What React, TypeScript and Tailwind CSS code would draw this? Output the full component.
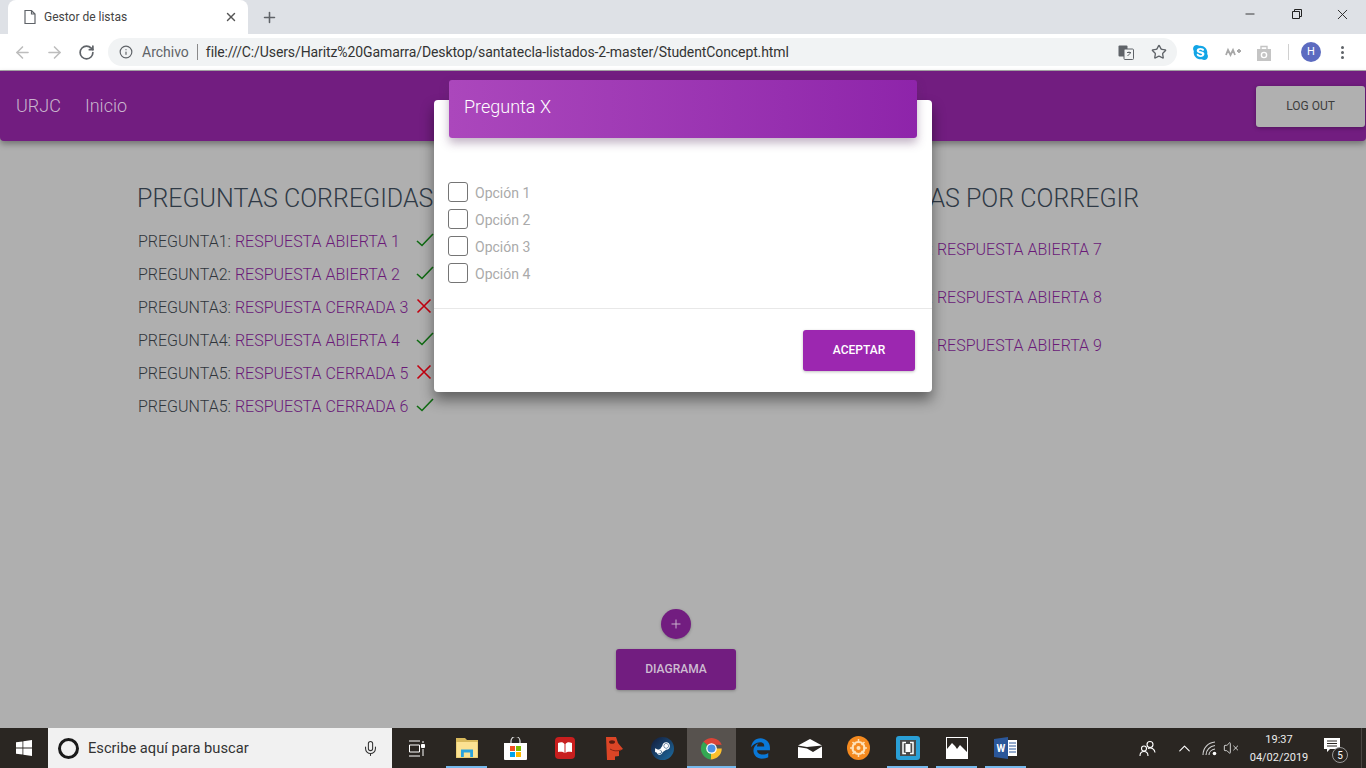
import { ArrowLeft, ArrowRight, ChevronUp, Info, Mic, Minus, Plus, RotateCw, Star, VolumeX, X } from "lucide-react";
import { FaEdgeLegacy, FaSkype, FaSteamSymbol } from "react-icons/fa";

const corrected = [
  { q: "PREGUNTA1:", a: "RESPUESTA ABIERTA 1", ok: true },
  { q: "PREGUNTA2:", a: "RESPUESTA ABIERTA 2", ok: true },
  { q: "PREGUNTA3:", a: "RESPUESTA CERRADA 3", ok: false },
  { q: "PREGUNTA4:", a: "RESPUESTA ABIERTA 4", ok: true },
  { q: "PREGUNTA5:", a: "RESPUESTA CERRADA 5", ok: false },
  { q: "PREGUNTA5:", a: "RESPUESTA CERRADA 6", ok: true },
];
const pending = [
  { q: "PREGUNTA7:", a: "RESPUESTA ABIERTA 7" },
  { q: "PREGUNTA8:", a: "RESPUESTA ABIERTA 8" },
  { q: "PREGUNTA9:", a: "RESPUESTA ABIERTA 9" },
];
const options = ["Opción 1", "Opción 2", "Opción 3", "Opción 4"];

function ChromeBar() {
  return (
    <div className="h-[71px] shrink-0 border-b border-[#a9a9a9] bg-white font-['Roboto',sans-serif]">
      {/* Tabs */}
      <div className="flex h-[34px] items-center bg-[#dee1e6] pl-2">
        <div className="flex h-[34px] w-[240px] items-center rounded-t-lg bg-white pl-[15px] pr-[10px]">
          <svg width="14" height="16" viewBox="0 0 14 16" fill="none" stroke="#5f6368" strokeWidth="1.2">
            <path d="M2 1.500h6.500l3.500 3.500v9.500H2z M8.500 1.500V5H12" />
          </svg>
          <span className="ml-[7px] flex-1 text-xs text-[#444]">Gestor de listas</span>
          <X size={14} color="#555" strokeWidth={2.4} />
        </div>
        <Plus size={17} color="#5f6368" strokeWidth={2.2} className="ml-[13px]" />
        <div className="flex-1" />
        <div className="mb-[6px] flex items-center pr-[15px]">
          <Minus size={14} color="#222" strokeWidth={1.5} className="-translate-x-px" />
          <svg className="ml-[33px]" width="12" height="12" viewBox="0 0 12 12" fill="none" stroke="#222">
            <path d="M1.500 3.500h7v7h-7z M3.500 3.500v-2h7v7h-2" />
          </svg>
          <X size={17} color="#222" strokeWidth={1.3} className="ml-[31px]" />
        </div>
      </div>
      {/* Toolbar */}
      <div className="flex h-[36px] items-center pl-[13px]">
        <ArrowLeft size={19} color="#bdbdbd" strokeWidth={2} />
        <ArrowRight size={19} color="#bdbdbd" strokeWidth={2} className="ml-[13px]" />
        <RotateCw size={17} color="#5f6368" strokeWidth={2.4} className="ml-[14px]" />
        <div className="ml-[13px] flex h-[28px] w-[1069px] items-center rounded-full bg-[#f1f3f4] pl-[11px] pr-[10px]">
          <Info size={14} color="#5f6368" strokeWidth={2} />
          <span className="ml-[9px] text-sm text-[#5f6368]">Archivo</span>
          <span className="ml-[8px] mr-[8px] h-[16px] w-px bg-[#8a8a8a]" />
          <span className="text-sm tracking-[-0.1px] text-[#333]">file:///C:/Users/Haritz%20Gamarra/Desktop/santatecla-listados-2-master/StudentConcept.html</span>
          <span className="flex-1" />
          <svg width="16" height="15" viewBox="0 0 16 15">
            <rect x="0.500" y="0.500" width="9" height="11" rx="1" fill="#5f6368" />
            <rect x="6" y="4" width="9.500" height="10.500" rx="1" fill="#f1f3f4" stroke="#5f6368" />
            <path d="M9 7.500h4M11 6.500v1M9.500 11l3-3" stroke="#5f6368" fill="none" />
          </svg>
          <Star size={16} color="#5f6368" strokeWidth={2} className="ml-[17px]" />
        </div>
        <FaSkype size={17} color="#12a5e6" className="ml-[15px]" />
        <svg className="ml-[16px]" width="16" height="10" viewBox="0 0 16 10" fill="none" stroke="#a8a8a8" strokeWidth="1.800">
          <path d="M1 8l2-5 2.500 5L8 3l2 5M12 4h4M14 2v4" />
        </svg>
        <svg className="ml-[15px]" width="16" height="17" viewBox="0 0 16 17">
          <path d="M1 5h14v12H1z" fill="#c4c4c4" />
          <path d="M5 5V2.500h6V5" fill="none" stroke="#c4c4c4" strokeWidth="1.400" />
          <circle cx="8" cy="11" r="2.600" fill="none" stroke="#fff" strokeWidth="1.400" />
        </svg>
        <span className="ml-[16px] h-[16px] w-px bg-[#d0d0d0]" />
        <span className="ml-[12px] flex h-[20px] w-[20px] items-center justify-center rounded-full bg-[#5c6bc0] text-[11px] text-white">H</span>
        <span className="ml-[20px] flex flex-col gap-[2px]">
          <span className="h-[3px] w-[3px] rounded-full bg-[#5f6368]" />
          <span className="h-[3px] w-[3px] rounded-full bg-[#5f6368]" />
          <span className="h-[3px] w-[3px] rounded-full bg-[#5f6368]" />
        </span>
      </div>
    </div>
  );
}

function Check() {
  return (
    <svg className="-mt-[3px]" width="18" height="14" viewBox="0 0 18 14" fill="none" stroke="#0f6b12" strokeWidth="1.600">
      <path d="M1 8l5 4.500L17 1" />
    </svg>
  );
}

function Cross() {
  return (
    <svg className="-mt-[3px]" width="16" height="16" viewBox="0 0 16 16" fill="none" stroke="#c4000f" strokeWidth="1.600">
      <path d="M1.500 1.500l13 13M14.500 1.500l-13 13" />
    </svg>
  );
}

function TaskSlot({ active, open, children }: { active?: boolean; open?: boolean; children: React.ReactNode }) {
  return (
    <div className={`relative flex h-[40px] w-[49px] items-center justify-center ${active ? "bg-[#57524e]" : ""}`}>
      {children}
      {open && <span className={`absolute bottom-0 h-[2px] bg-[#76b9ed] ${active ? "inset-x-0" : "inset-x-1"}`} />}
    </div>
  );
}

function Taskbar() {
  return (
    <div className="flex h-[40px] shrink-0 items-center bg-[#2a2622] font-['Roboto',sans-serif] text-white">
      <div className="flex h-full w-[48px] items-center justify-center">
        <svg width="16" height="16" viewBox="0 0 16 16" fill="#fff">
          <path d="M0 2.300l6.500-.9v6.200H0zM7.300 1.300L16 0v7.600H7.300zM0 8.400h6.500v6.200L0 13.700zM7.300 8.400H16V16l-8.700-1.300z" />
        </svg>
      </div>
      <div className="flex h-full w-[344px] items-center bg-[#f1f1f1] pl-[10px] pr-[13px]">
        <span className="h-[21px] w-[21px] rounded-full border-[3px] border-[#1a1a1a]" />
        <span className="ml-[9px] flex-1 text-[14.7px] text-[#333]">Escribe aquí para buscar</span>
        <Mic size={17} color="#333" strokeWidth={1.5} />
      </div>
      <div className="ml-[16px] mr-[17px] w-[17px]">
        <svg width="17" height="17" viewBox="0 0 17 17" fill="none" stroke="#fff">
          <path d="M1 1h11M1 16h11M1.500 5h10v7h-10zM15 1v2" />
          <path d="M13.500 4.500h3v3h-3z" fill="#fff" />
          <path d="M15 9v7" />
        </svg>
      </div>
      <TaskSlot open>
        <svg width="22" height="20" viewBox="0 0 22 20">
          <path d="M0 0h9l2 2h11v18H0z" fill="#d8b95c" />
          <path d="M0.500 4h21v15.500H0.500z" fill="#fbe292" />
          <path d="M5 11.500h12v7.500h-2.800v-4.500H7.800V19H5z" fill="#2aa3dd" />
        </svg>
      </TaskSlot>
      <TaskSlot>
        <svg width="23" height="23" viewBox="0 0 23 23">
          <path d="M7 7V4a4.500 4.500 0 019 0v3" fill="none" stroke="#ddd" strokeWidth="1.200" />
          <path d="M0 6h23v16a1 1 0 01-1 1H1a1 1 0 01-1-1z" fill="#fff" />
          <path d="M6 9h5v5H6z" fill="#f25022" />
          <path d="M12 9h5v5h-5z" fill="#7fba00" />
          <path d="M6 15h5v5H6z" fill="#00a4ef" />
          <path d="M12 15h5v5h-5z" fill="#ffb900" />
        </svg>
      </TaskSlot>
      <TaskSlot>
        <svg width="20" height="22" viewBox="0 0 20 22">
          <rect width="20" height="22" rx="4" fill="#c81e1e" />
          <path d="M3 6c3-1 5-1 6.500 1v9C8 14.500 6 14.500 3 15zM17 6c-3-1-5-1-6.500 1v9c1.500-1.500 3.500-1.500 6.500-1z" fill="#fff" />
        </svg>
      </TaskSlot>
      <TaskSlot>
        <svg width="18" height="24" viewBox="0 0 18 24">
          <path d="M1 1h10l2 6 5 6-4 2v5l-4 .5V24H2z" fill="#dc4526" />
          <ellipse cx="7" cy="6" rx="3" ry="1.800" fill="#5a1c10" />
          <path d="M5 13c3 2 7 2.500 11 1" fill="none" stroke="#8a2413" />
        </svg>
      </TaskSlot>
      <TaskSlot>
        <span className="flex h-[23px] w-[23px] items-center justify-center rounded-full bg-gradient-to-br from-[#111c3a] to-[#1a6ea3]">
          <FaSteamSymbol size={17} color="#fff" />
        </span>
      </TaskSlot>
      <TaskSlot active open>
        <svg width="23" height="23" viewBox="0 0 24 24">
          <path d="M12 12L3.500 5A11.500 11.500 0 0122.700 8H12z" fill="#db4437" />
          <path d="M12 12h10.700A11.500 11.500 0 0111 23.500z" fill="#fbc02d" />
          <path d="M12 12l-1 11.500A11.500 11.500 0 013.500 5z" fill="#34a853" />
          <circle cx="12" cy="12" r="5.500" fill="#fff" />
          <circle cx="12" cy="12" r="4.200" fill="#4a90e2" />
        </svg>
      </TaskSlot>
      <TaskSlot>
        <FaEdgeLegacy size={21} color="#0a78d7" />
      </TaskSlot>
      <TaskSlot>
        <svg width="24" height="19" viewBox="0 0 24 19" fill="#fff">
          <path d="M0 6.500L12 0l12 6.500-15 1.500z" />
          <path d="M0 8l9 1.500L15 13 24 7.500V19H0z" />
        </svg>
      </TaskSlot>
      <TaskSlot>
        <svg width="23" height="24" viewBox="0 0 23 24">
          <ellipse cx="11.500" cy="12" rx="11.500" ry="12" fill="#f58a1f" />
          <circle cx="11.500" cy="12" r="6" fill="none" stroke="#fde1b8" strokeWidth="2.200" />
          <circle cx="11.500" cy="12" r="2" fill="#fde1b8" />
          <path d="M11.500 3v4M11.500 17v4M3 12h4M16 12h4M5.500 6l3 3M14.500 15l3 3M17.500 6l-3 3M8.500 15l-3 3" stroke="#fde1b8" strokeWidth="1.500" />
        </svg>
      </TaskSlot>
      <TaskSlot open>
        <svg width="24" height="24" viewBox="0 0 24 24">
          <rect width="24" height="24" rx="3" fill="#2a9fd6" />
          <rect x="4" y="4" width="16" height="16" fill="#4a4a4a" />
          <path d="M10 6.500H7v11h3M14 6.500h3v11h-3" fill="none" stroke="#fff" strokeWidth="1.500" />
          <rect x="9.500" y="8" width="5" height="8" fill="#fff" />
        </svg>
      </TaskSlot>
      <TaskSlot open>
        <svg width="22" height="22" viewBox="0 0 22 22">
          <path d="M0 0h22v22H0z" fill="#fff" />
          <path d="M1 1h20v20H1z" fill="#2a2622" />
          <path d="M1 21V12l5-6 3 3 2 3 3-4 4 4 3 3v6z" fill="#fff" />
        </svg>
      </TaskSlot>
      <TaskSlot open>
        <svg width="24" height="22" viewBox="0 0 24 22">
          <path d="M9 3h14v16H9z" fill="#fff" />
          <path d="M15 6h7M15 9h7M15 12h7M15 15h7" stroke="#2b579a" />
          <path d="M0 2l14-2v22L0 20z" fill="#2b579a" />
          <text x="2.500" y="15" fontSize="10" fontWeight="700" fill="#fff" fontFamily="Roboto, sans-serif">W</text>
        </svg>
      </TaskSlot>
      <div className="flex-1" />
      <svg className="mr-[19px]" width="17" height="17" viewBox="0 0 17 17" fill="none" stroke="#fff" strokeWidth="1.100">
        <circle cx="11" cy="4.500" r="3" />
        <circle cx="5" cy="8.500" r="2.500" />
        <path d="M1 16c0-3 2-4.500 4-4.500s4 1.500 4 4.500M9 8.500c1-.6 3-.9 4.500 0 1.500 1 2.500 2.500 2.500 4" />
      </svg>
      <ChevronUp size={19} color="#fff" strokeWidth={1.4} className="mr-[8px]" />
      <svg className="mr-[6px]" width="15" height="15" viewBox="0 0 15 15" fill="none" stroke="#d0d0d0" strokeWidth="1.100">
        <path d="M1 14C1 7 6 1.500 13 1M4 14c0-5 4-9 9-9.500M7 14c0-3 2.500-5.500 6-6" />
        <circle cx="12.500" cy="12.500" r="1.800" fill="#fff" stroke="none" />
      </svg>
      <VolumeX size={16} color="#ddd" strokeWidth={1.4} />
      <div className="ml-[9px] flex w-[62px] flex-col items-center pt-[2px] text-[11px] leading-[18px] text-[#ececec]">
        <span>19:37</span>
        <span>04/02/2019</span>
      </div>
      <div className="relative ml-[14px] h-[24px] w-[25px]">
        <svg width="16" height="15" viewBox="0 0 16 15" fill="#fff" className="mt-[2px]">
          <path d="M0 0h16v11H6l-3 3v-3H0z" />
          <path d="M3 3h10M3 5.500h10M3 8h10" stroke="#2a2622" />
        </svg>
        <span className="absolute bottom-[-3px] right-[1px] flex h-[16px] w-[16px] items-center justify-center rounded-full border border-[#999] bg-[#2a2622] text-[10px]">5</span>
      </div>
      <span className="ml-[12px] mr-[4px] h-full w-px bg-[#4a4642]" />
    </div>
  );
}

export default function App() {
  return (
    <div className="relative flex h-screen w-[1366px] flex-col overflow-hidden bg-[#afafaf] font-['Roboto',sans-serif]">
      <ChromeBar />

      {/* Navbar */}
      <div className="flex h-[70px] shrink-0 items-center rounded-b bg-[#721d80] pl-4 pr-px shadow-[0_3px_6px_rgba(0,0,0,0.35)]">
        <span className="text-lg font-light text-[#c9b6cd]">URJC</span>
        <span className="ml-6 text-lg font-light text-[#c9b6cd]">Inicio</span>
        <div className="flex-1" />
        <button className="h-[41px] w-[109px] rounded-[3px] bg-[#b0b0b0] text-xs font-normal text-[#3d3d3d] shadow-[0_1px_4px_rgba(0,0,0,0.3)]">LOG OUT</button>
      </div>

      {/* Columns */}
      <div className="flex flex-1 pl-[137px] pt-[42px]">
        <div className="w-[700px]">
          <h2 className="text-[25px] leading-8 font-light text-[#2f3a46]">PREGUNTAS CORREGIDAS</h2>
          <div className="mt-[10px] ml-px flex flex-col">
            {corrected.map((row) => (
              <div key={row.a} className="flex h-[33px] items-center text-base font-light">
                <span className="w-[278px] whitespace-nowrap">
                  <span className="text-[#30363c]">{row.q}</span>
                  <span className="ml-1 text-[#6a1a78]">{row.a}</span>
                </span>
                {row.ok ? <Check /> : <Cross />}
              </div>
            ))}
          </div>
        </div>
        <div>
          <h2 className="-ml-[18px] whitespace-nowrap text-[25px] leading-8 font-light text-[#2f3a46]">PREGUNTAS POR CORREGIR</h2>
          <div className="mt-[11px] ml-[3px] flex flex-col">
            {pending.map((row) => (
              <div key={row.a} className="flex h-[48px] items-center text-base font-light">
                <span className="text-[#30363c]">{row.q}</span>
                <span className="ml-1 text-[#6a1a78]">{row.a}</span>
              </div>
            ))}
          </div>
        </div>
      </div>

      {/* Bottom actions */}
      <div className="flex shrink-0 flex-col items-center pb-[38px] pr-[14px]">
        <button className="flex h-[30px] w-[30px] items-center justify-center rounded-full bg-[#721d80] shadow-[0_1px_3px_rgba(0,0,0,0.25)]">
          <Plus size={14} color="#cdbcd1" strokeWidth={1.6} />
        </button>
        <button className="mt-[10px] h-[41px] w-[120px] rounded-[3px] bg-[#721d80] pb-[2px] text-xs font-medium text-[#cdbcd1] shadow-[0_1px_3px_rgba(0,0,0,0.25)]">DIAGRAMA</button>
      </div>

      <Taskbar />

      {/* Modal */}
      <div className="absolute left-[434px] top-[100px] h-[292px] w-[498px] rounded bg-white shadow-[0_8px_14px_rgba(0,0,0,0.45)]">
        <div className="absolute -top-[20px] left-[15px] flex h-[58px] w-[468px] items-center rounded-[3px] bg-gradient-to-r from-[#ab47bc] to-[#8e24aa] pb-[4px] pl-[15px] text-lg font-light text-white shadow-[0_5px_10px_rgba(80,40,90,0.35)]">
          Pregunta X
        </div>
        <div className="flex h-[209px] flex-col border-b border-[#e8e8e8] pl-[14px] pt-[79px]">
          {options.map((opt) => (
            <label key={opt} className="flex h-[27px] items-center text-sm text-[#aaaaaa]">
              <span className="-mt-px h-[20px] w-[20px] rounded-[3px] border border-[#757575]" />
              <span className="ml-[7px]">{opt}</span>
            </label>
          ))}
        </div>
        <div className="flex justify-end pr-[17px] pt-[21px]">
          <button className="h-[41px] w-[112px] rounded-[3px] bg-[#9c27b0] pb-px text-xs font-medium text-white shadow-[0_1px_3px_rgba(0,0,0,0.25)]">ACEPTAR</button>
        </div>
      </div>
    </div>
  );
}
